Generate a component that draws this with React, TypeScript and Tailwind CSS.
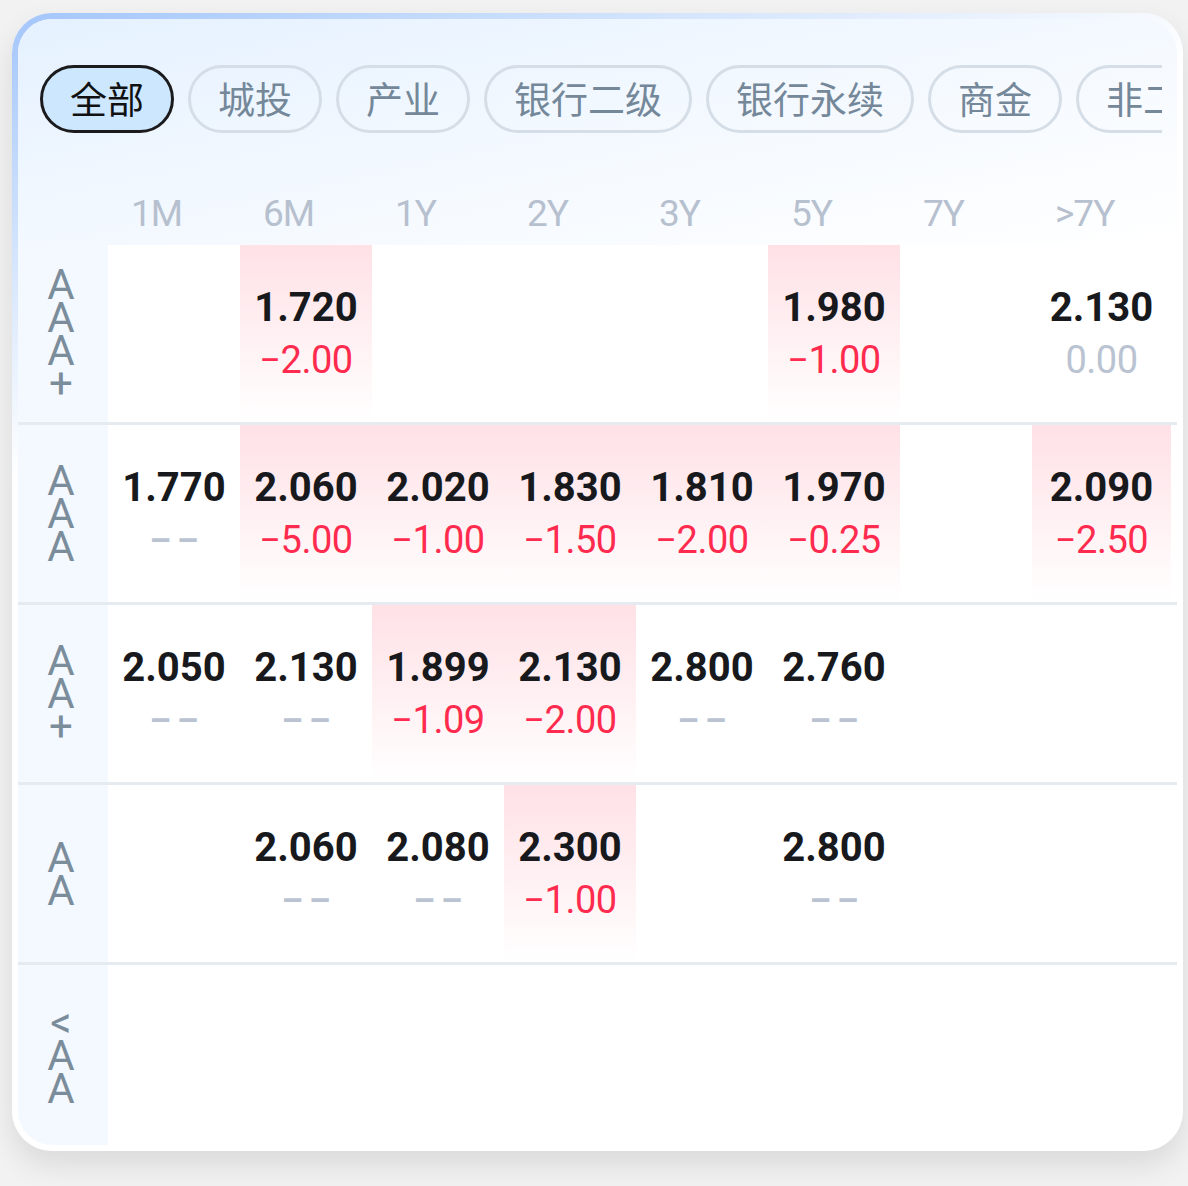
import React from 'react';

type Cell = { v: string; d: string; tone: 'down' | 'flat' | 'none' } | null;

const tabs = ['全部', '城投', '产业', '银行二级', '银行永续', '商金', '非二永'];
const terms = ['1M', '6M', '1Y', '2Y', '3Y', '5Y', '7Y', '>7Y'];

const dn = (v: string, d: string): Cell => ({ v, d, tone: 'down' });
const nil = (v: string): Cell => ({ v, d: '', tone: 'none' });

const rows: { label: string; cells: Cell[] }[] = [
  {
    label: 'AAA+',
    cells: [null, dn('1.720', '−2.00'), null, null, null, dn('1.980', '−1.00'), null, { v: '2.130', d: '0.00', tone: 'flat' }],
  },
  {
    label: 'AAA',
    cells: [
      nil('1.770'),
      dn('2.060', '−5.00'),
      dn('2.020', '−1.00'),
      dn('1.830', '−1.50'),
      dn('1.810', '−2.00'),
      dn('1.970', '−0.25'),
      null,
      dn('2.090', '−2.50'),
    ],
  },
  {
    label: 'AA+',
    cells: [nil('2.050'), nil('2.130'), dn('1.899', '−1.09'), dn('2.130', '−2.00'), nil('2.800'), nil('2.760'), null, null],
  },
  {
    label: 'AA',
    cells: [null, nil('2.060'), nil('2.080'), dn('2.300', '−1.00'), null, nil('2.800'), null, null],
  },
  { label: '<AA', cells: [null, null, null, null, null, null, null, null] },
];

const colW = (i: number) => (i === 7 ? 'w-[139px]' : 'w-[132px]');

const ValueCell = ({ cell, i }: { cell: Cell; i: number }) => {
  const shaded = cell?.tone === 'down';
  return (
    <div
      className={`${colW(i)} shrink-0 flex flex-col items-center justify-center ${
        shaded ? 'bg-linear-to-b from-[#ffe1e6] to-white' : ''
      }`}
    >
      {cell && (
        <>
          <span className="text-[40px] leading-[52px] font-bold text-[#18191d]">{cell.v}</span>
          {cell.tone === 'none' ? (
            <span className="text-[34px] leading-[52px] font-bold tracking-[6px] pl-[6px] text-[#b9c3d1]">––</span>
          ) : (
            <span
              className={`text-[38px] leading-[52px] tracking-[-0.5px] ${
                cell.tone === 'down' ? 'text-[#ff2b4e]' : 'text-[#b9c3d1]'
              }`}
            >
              {cell.d}
            </span>
          )}
        </>
      )}
    </div>
  );
};

export default function App() {
  return (
    <div className="min-h-[1186px] w-full bg-[#f2f2f2] pl-[12px] pt-[13px] font-['Roboto',sans-serif]">
      <div className="h-[1138px] w-[1171px] rounded-[40px] bg-[linear-gradient(160deg,#a4c6fb_0%,#c9defc_12%,#ffffff_30%)] p-[6px] shadow-[0_14px_30px_rgba(0,0,0,0.1)]">
        <div className="flex h-full flex-col overflow-hidden rounded-[34px] bg-white">
          {/* header */}
          <div className="h-[226px] shrink-0 bg-[linear-gradient(168deg,#e5f1ff_0%,#f2f8ff_45%,#ffffff_100%)]">
            <div className="pl-[22px] pr-[15px] pt-[46px]">
              <div className="flex gap-[14px] overflow-hidden">
                {tabs.map((t, i) => (
                  <div
                    key={t}
                    className={`flex h-[68px] shrink-0 items-center whitespace-nowrap rounded-full border-[3px] px-[27px] font-['Noto_Sans_CJK_SC',sans-serif] text-[37px] ${
                      i === 0
                        ? 'border-[#1b1b1d] bg-[#cde7ff] text-[#111]'
                        : 'border-[#d5dde6] text-[#74889a]'
                    }`}
                  >
                    {t}
                  </div>
                ))}
              </div>
            </div>
            <div className="flex pt-[62px]">
              <div className="w-[90px] shrink-0" />
              {terms.map((t, i) => (
                <div key={t} className={`${colW(i)} shrink-0 pl-[23px] text-[37px] font-normal leading-[38px] tracking-[-1px] text-[#b6c0ce]`}>
                  {t}
                </div>
              ))}
            </div>
          </div>

          {/* rows */}
          <div className="flex flex-1 flex-col">
            {rows.map((r, ri) => (
              <div
                key={r.label}
                className={`flex h-[180px] shrink-0 ${ri < rows.length - 1 ? 'border-b-[3px] border-[#e5ebf1]' : 'flex-1'}`}
              >
                <div className="flex w-[90px] shrink-0 flex-col items-center justify-center bg-[#f4f9ff] pr-[4px] text-[42px] leading-[33px] text-[#7b8d9b]">
                  {r.label.split('').map((ch, k) => (
                    <span key={k}>{ch}</span>
                  ))}
                </div>
                {r.cells.map((c, i) => (
                  <ValueCell key={i} cell={c} i={i} />
                ))}
              </div>
            ))}
          </div>
        </div>
      </div>
    </div>
  );
}
